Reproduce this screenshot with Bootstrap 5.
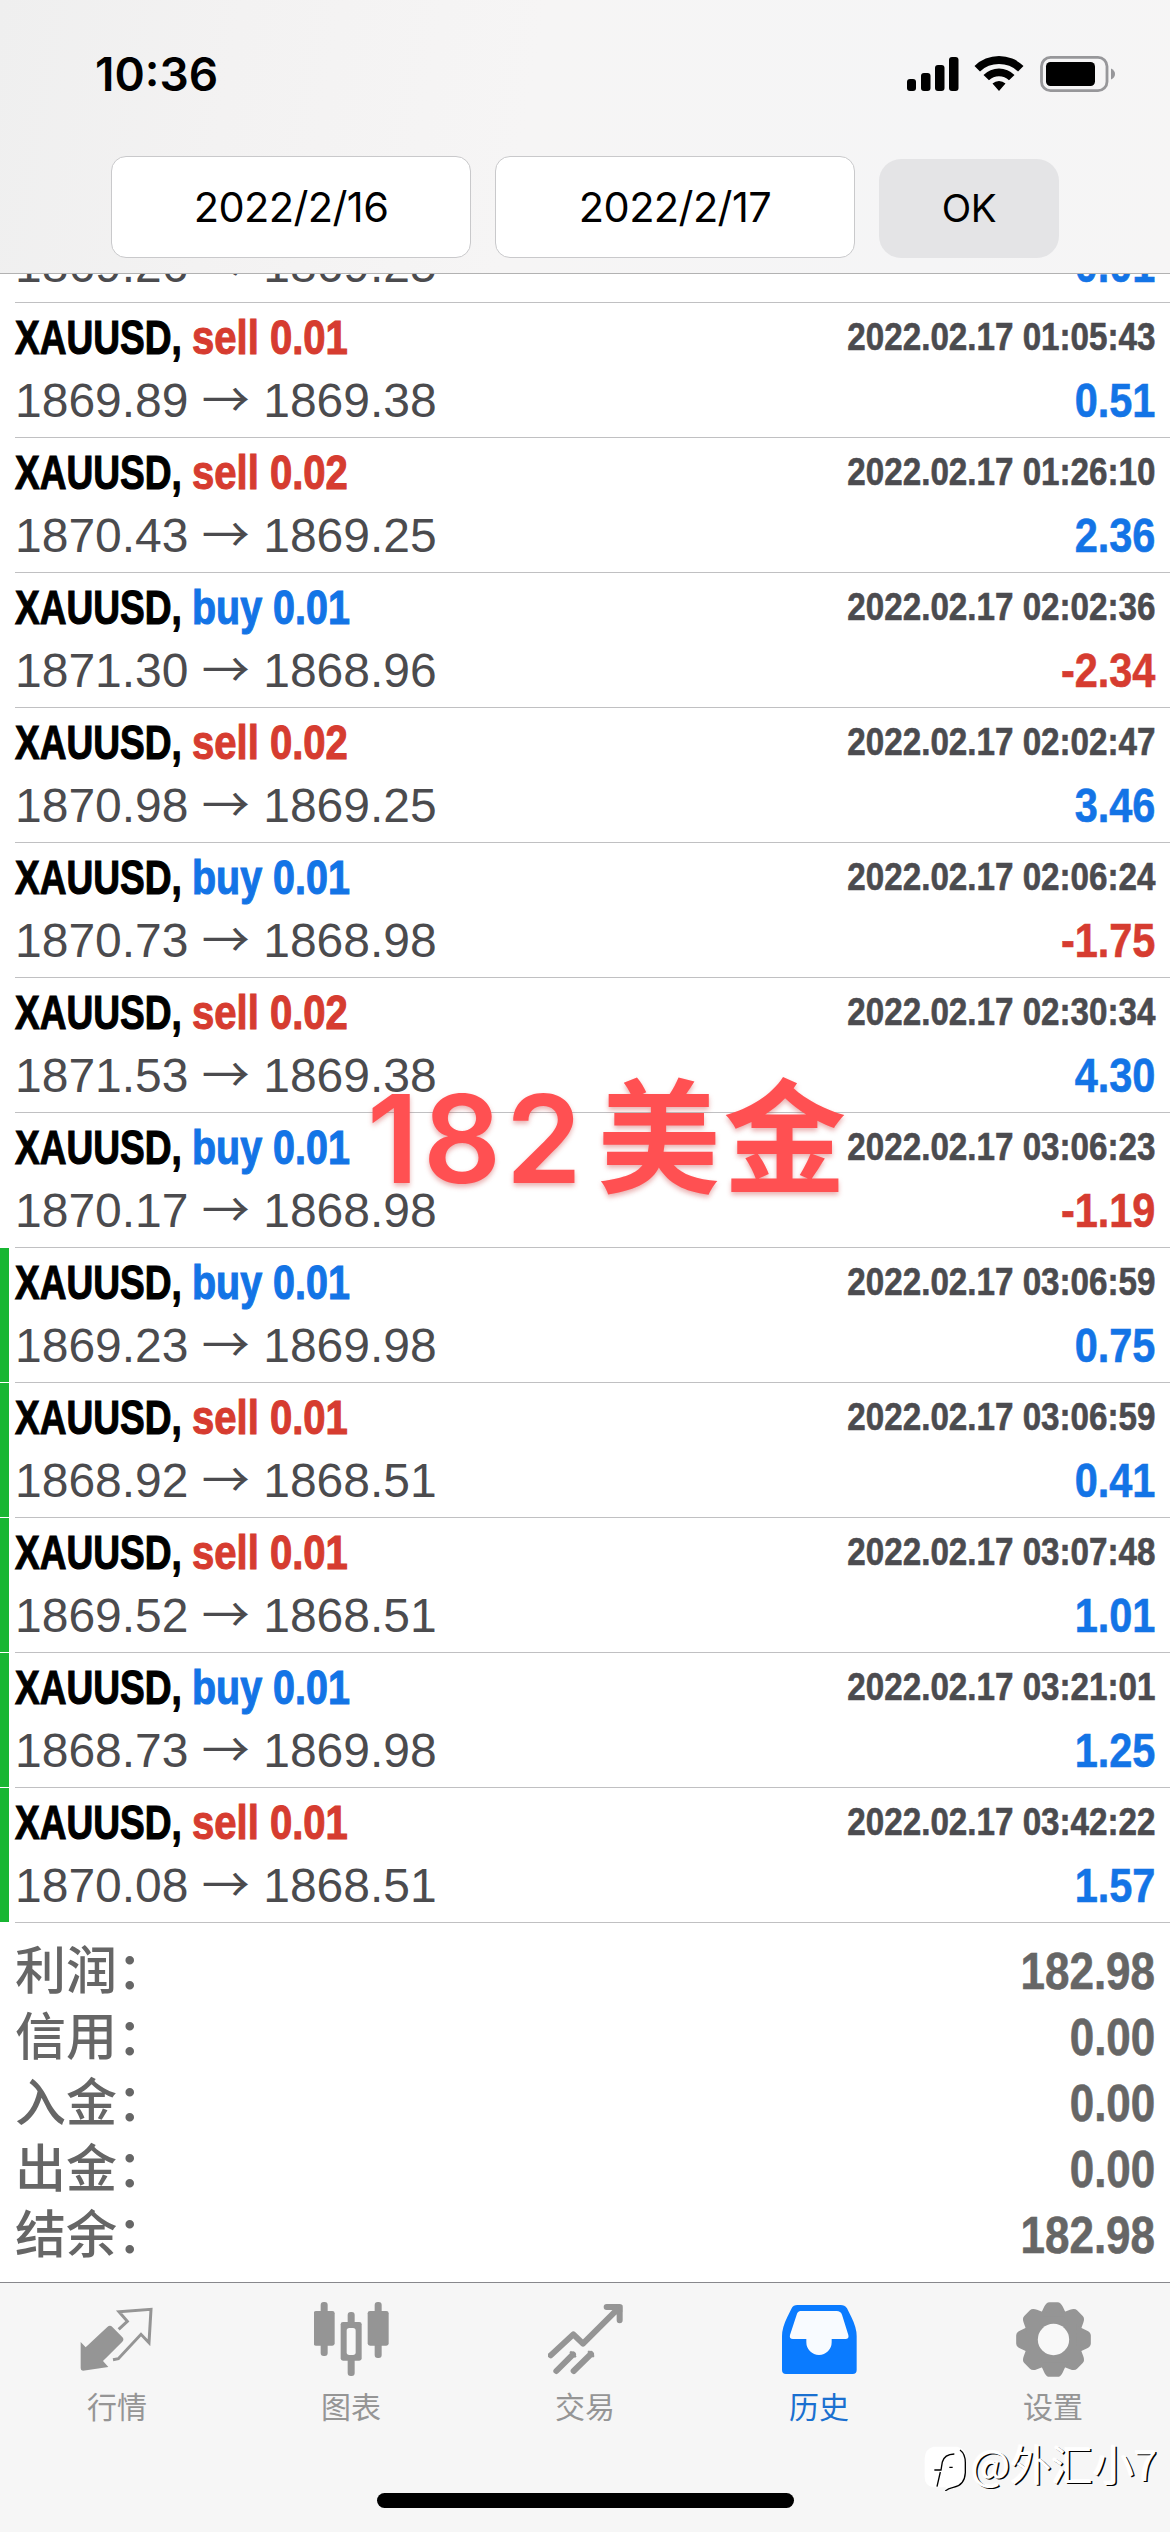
<!DOCTYPE html>
<html lang="zh-CN">
<head>
<meta charset="utf-8">
<title>历史</title>
<link href="https://cdn.jsdelivr.net/npm/bootstrap@5.3.0/dist/css/bootstrap.min.css" rel="stylesheet">
<style>
  body { width: 1170px; height: 2532px; overflow: hidden; background: #fff; font-family: "Liberation Sans", "Noto Sans CJK SC", sans-serif; line-height: 1; color: #000; }
  .topbar { height: 274px; border-bottom: 1px solid #b2b2b2; background: linear-gradient(100deg, #efefef 0, #f3f2f2 20%, #f6f5f5 45%, #f5f5f6 80%, #f6f5f5 100%); font-family: Inter, sans-serif; }
  .status { height: 156px; padding: 0 55px 0 95px; }
  .clock { font-size: 46px; font-weight: 600; letter-spacing: 0; padding-top: 51px; }
  .status svg { margin-top: 52px; }
  .date-box { width: 360px; height: 102px; border: 1px solid #c9c9cb; border-radius: 15px; background: #fff; font-size: 41.5px; letter-spacing: -.6px; padding-top: 1px; }
  .filters { padding-left: 111px; gap: 24px; }
  .ok-btn, .ok-btn:hover { width: 180px; height: 99px; margin-top: 3px; border: 0; border-radius: 22px; background: #e4e4e6; color: #000; font-size: 38.5px; letter-spacing: -.5px; font-family: Inter, sans-serif; }
  .deal { height: 135px; flex: none; border: 0; padding: 3px 15px 0 0; background: none; border-radius: 0; }
  .deal-body { border-bottom: 1px solid #c0c0c2; margin-left: 15px; margin-right: -15px; padding-right: 15px; height: 132px; }
  .deal-edge::before { content: ""; position: absolute; left: 0; top: 0; width: 9px; height: 134px; background: #18b632; }
  .ln { height: 63px; line-height: 63px; white-space: pre; }
  .sym, .act, .when, .amt, .total { display: inline-block; font-weight: 700; white-space: pre; -webkit-text-stroke: .6px currentColor; }
  .sym, .act { font-size: 48px; transform-origin: left; -webkit-text-stroke-width: 1.1px; }
  .sym { transform: scaleX(.772); width: 177px; color: #000; }
  .act { transform: scaleX(.822); }
  .act.sell { transform: scaleX(.834); }
  .when { font-size: 38.5px; line-height: 62px; color: #4b4b4f; transform: scaleX(.862); transform-origin: right; }
  .amt { font-size: 48px; transform: scaleX(.864); transform-origin: right; }
  .price { font-size: 48px; color: #4b4b4e; }
  .arr { font-family: "Noto Sans CJK SC", sans-serif; line-height: 0; }
  .sell, .loss { color: #d63c30; }
  .buy, .gain { color: #1374e6; }
  .totals { height: 359px; flex: none; padding: 16px 15px 0; color: #666; font-size: 51px; }
  .totals .item { height: 66px; line-height: 66px; }
  .totals .name { font-weight: 500; }
  .total { transform: scaleX(.862); transform-origin: right; }
  .tabs { height: 250px; border-top: 1px solid #88888c; background: #f6f6f6; color: #959595; }
  .tab { width: 234px; padding-top: 19px; font-size: 30px; }
  .tab span { margin-top: 14px; line-height: 34px; }
  .tab-on { color: #0a7bff; }
  .tab-on span { color: #1a70d0; }
  .home-bar { width: 417px; height: 15px; left: 377px; top: 2493px; border-radius: 8px; background: #000; }
  .stamp { left: 367px; top: 1078px; color: #ff5052; font: 600 122px/122px Inter, "Noto Sans CJK SC", sans-serif; text-shadow: 0 3px 5px rgba(200, 60, 60, .4); white-space: nowrap; }
  .stamp .num { letter-spacing: 4.5px; }
  .stamp .han { font-family: "Noto Sans CJK SC", sans-serif; font-weight: 700; font-size: 123px; letter-spacing: 3px; margin-left: 11px; line-height: 0; }
  .credit { left: 923px; top: 2441px; color: #fff; font: 400 41.5px/48px "Noto Sans CJK SC", sans-serif; text-shadow: 1.5px 1px 0 #000, -1px -1px 1px #fff; }
  .credit span { margin-left: -2px; letter-spacing: -.2px; margin-top: -2px; white-space: nowrap; }
</style>
</head>
<body class="position-relative d-flex flex-column">

<header class="topbar flex-shrink-0">
  <div class="status d-flex justify-content-between align-items-start">
    <div class="clock">10:36</div>
    <svg width="209" height="44" viewBox="906 52 209 44">
      <rect x="907" y="79" width="9" height="12" rx="3"/><rect x="921" y="73" width="9.500" height="18" rx="3"/><rect x="935" y="65" width="9.500" height="26" rx="3"/><rect x="949" y="57" width="9.500" height="34" rx="3"/>
      <path d="M974.500 66a35 35 0 0 1 49 0l-5.500 5.500a27.500 27.500 0 0 0-38 0zM983.500 75a22 22 0 0 1 31 0l-5.500 5.300a14.500 14.500 0 0 0-20 0zM992.500 83.500a9.500 9.500 0 0 1 13 0l-6.500 7.500z"/>
      <rect x="1041.500" y="57.300" width="65.500" height="33.400" rx="9" fill="none" stroke="#97979a" stroke-width="2.800"/>
      <rect x="1046" y="62" width="49" height="24" rx="4.500"/>
      <path d="M1111 68.500q4 2 4 5.500t-4 5.500z" fill="#97979a"/>
    </svg>
  </div>
  <div class="filters d-flex">
    <div class="date-box d-flex align-items-center justify-content-center">2022/2/16</div>
    <div class="date-box d-flex align-items-center justify-content-center">2022/2/17</div>
    <button class="ok-btn btn p-0">OK</button>
  </div>
</header>

<main class="flex-grow-1 overflow-hidden d-flex flex-column justify-content-end">
  <div class="list-group list-group-flush flex-shrink-0" id="deals"></div>
  <section class="totals">
    <div class="item d-flex justify-content-between"><span class="name">利润：</span><span class="total">182.98</span></div>
    <div class="item d-flex justify-content-between"><span class="name">信用：</span><span class="total">0.00</span></div>
    <div class="item d-flex justify-content-between"><span class="name">入金：</span><span class="total">0.00</span></div>
    <div class="item d-flex justify-content-between"><span class="name">出金：</span><span class="total">0.00</span></div>
    <div class="item d-flex justify-content-between"><span class="name">结余：</span><span class="total">182.98</span></div>
  </section>
</main>

<nav class="tabs d-flex flex-shrink-0">
  <div class="tab d-flex flex-column align-items-center">
    <svg width="75" height="75" viewBox="88 96 225 225">
      <path d="M90 216l15 16 65-61q8-7 15 0l29 29q8 7 1 15l-58 58 16 18-76 11q-7 0-7-7z" fill="currentColor"/>
      <path d="M204 178l26-24-25-29 96-7-6 100-24-25-68 73-16 3" fill="none" stroke="currentColor" stroke-width="9"/>
    </svg><span>行情</span>
  </div>
  <div class="tab d-flex flex-column align-items-center">
    <svg width="75" height="75" viewBox="790 96 225 225" fill="currentColor">
      <rect x="810" y="96" width="21" height="162" rx="9"/><rect x="789" y="123" width="63" height="104" rx="7"/>
      <rect x="972" y="96" width="21" height="168" rx="9"/><rect x="951" y="123" width="63" height="104" rx="7"/>
      <rect x="891" y="126" width="21" height="60" rx="9"/><rect x="891" y="260" width="21" height="58" rx="9"/>
      <rect x="870" y="156" width="63" height="116" rx="7"/><rect x="888" y="174" width="27" height="81" rx="8" fill="#f8f8f8"/>
    </svg><span>图表</span>
  </div>
  <div class="tab d-flex flex-column align-items-center">
    <svg width="75" height="75" viewBox="142 96 225 225" fill="none" stroke="currentColor" stroke-width="18" stroke-linecap="round" stroke-linejoin="round">
      <path d="M150 256l68-63 29 28 106-106M318 111h39v40"/>
      <path d="M345 105h20v22z" fill="currentColor" stroke="none"/>
      <path d="M167 303l50-50M219 303l52-51"/>
      <path d="M211 247l12 12M265 246l12 12" stroke-width="7" stroke-linecap="square"/>
    </svg><span>交易</span>
  </div>
  <div class="tab tab-on d-flex flex-column align-items-center">
    <svg width="75" height="75" viewBox="844 96 225 225">
      <path d="M890 105H1020q12 0 19 10l13 26q16 32 16 57v102q0 12-12 12H856q-12 0-12-12V198q0-25 16-57l13-26q5-10 17-10z" fill="currentColor"/>
      <path d="M900 123h108q12 0 16 11l19 61q3 12-9 12h-41v10a38 38 0 0 1-76 0v-10h-40q-12 0-9-12l20-61q3-11 12-11z" fill="#f8fbff"/>
    </svg><span>历史</span>
  </div>
  <div class="tab d-flex flex-column align-items-center">
    <svg width="75" height="75" viewBox="-112.500 -112.500 225 225" fill="currentColor">
      <defs><path id="cog" d="M-44-70Q-34-82-28-98Q-22-112-12-112H12Q22-112 28-98Q34-82 44-70Z"/></defs>
      <circle r="83"/>
      <use href="#cog"/><use href="#cog" transform="rotate(45)"/><use href="#cog" transform="rotate(90)"/><use href="#cog" transform="rotate(135)"/><use href="#cog" transform="rotate(180)"/><use href="#cog" transform="rotate(225)"/><use href="#cog" transform="rotate(270)"/><use href="#cog" transform="rotate(315)"/>
      <circle r="47" fill="#f8f8f8"/>
    </svg><span>设置</span>
  </div>
</nav>

<div class="stamp position-absolute"><span class="num">182</span><span class="han">美金</span></div>
<div class="home-bar position-absolute"></div>
<div class="credit position-absolute d-flex">
  <svg class="flex-shrink-0" width="50" height="50" viewBox="129 513 150 150">
    <path d="M160 530h72q26 6 26 34v50q-3 36-40 40-14 4-22 12l2-14h-38q-26-4-26-30v-58q2-28 26-34z" fill="#fff"/>
    <path d="M240 540q17 12 16 42v26q-2 38-36 44-16 3-24 11M163 600h20l4-24q6-23 36-24M181 606l-10 44M208 592h10" fill="none" stroke="#000" stroke-width="4"/>
  </svg><span>@外汇小7</span>
</div>

<script>
  // [side, volume, open, close, time, profit, closed by stop/take level]
  const deals = [
    ["sell", "0.01", "1869.26", "1869.25", "2022.02.17 01:05:40", "0.01"],
    ["sell", "0.01", "1869.89", "1869.38", "2022.02.17 01:05:43", "0.51"],
    ["sell", "0.02", "1870.43", "1869.25", "2022.02.17 01:26:10", "2.36"],
    ["buy", "0.01", "1871.30", "1868.96", "2022.02.17 02:02:36", "-2.34"],
    ["sell", "0.02", "1870.98", "1869.25", "2022.02.17 02:02:47", "3.46"],
    ["buy", "0.01", "1870.73", "1868.98", "2022.02.17 02:06:24", "-1.75"],
    ["sell", "0.02", "1871.53", "1869.38", "2022.02.17 02:30:34", "4.30"],
    ["buy", "0.01", "1870.17", "1868.98", "2022.02.17 03:06:23", "-1.19"],
    ["buy", "0.01", "1869.23", "1869.98", "2022.02.17 03:06:59", "0.75", 1],
    ["sell", "0.01", "1868.92", "1868.51", "2022.02.17 03:06:59", "0.41", 1],
    ["sell", "0.01", "1869.52", "1868.51", "2022.02.17 03:07:48", "1.01", 1],
    ["buy", "0.01", "1868.73", "1869.98", "2022.02.17 03:21:01", "1.25", 1],
    ["sell", "0.01", "1870.08", "1868.51", "2022.02.17 03:42:22", "1.57", 1]
  ];
  document.getElementById("deals").innerHTML = deals.map(([side, vol, open, close, time, profit, edge]) => `
    <div class="deal list-group-item ${edge ? "deal-edge" : ""}"><div class="deal-body">
      <div class="ln d-flex justify-content-between"><div><span class="sym">XAUUSD,</span><span class="act ${side}">${side} ${vol}</span></div><span class="when">${time}</span></div>
      <div class="ln d-flex justify-content-between"><span class="price">${open} <span class="arr">→</span> ${close}</span><span class="amt ${profit[0] === "-" ? "loss" : "gain"}">${profit}</span></div>
    </div></div>`).join("");
</script>
<script src="https://cdn.jsdelivr.net/npm/bootstrap@5.3.0/dist/js/bootstrap.bundle.min.js"></script>
</body>
</html>
